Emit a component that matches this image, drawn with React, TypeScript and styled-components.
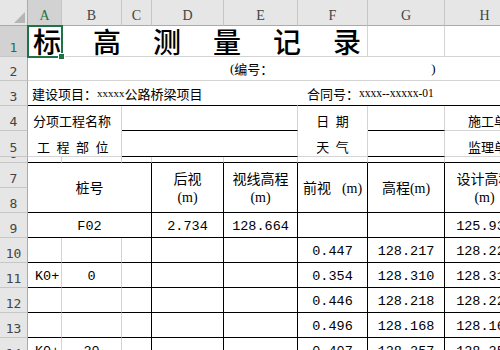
import React from "react";
import styled, { createGlobalStyle, css } from "styled-components";

const GlobalStyle = createGlobalStyle`
  html, body {
    margin: 0;
    padding: 0;
    background: #fff;
  }
  body {
    width: 500px;
    height: 350px;
    overflow: hidden;
  }
`;

const colWidths = [28, 34, 60, 30, 72, 74, 70, 77, 80];
const rowHeights = [26, 31, 24, 25, 25, 26, 6, 25, 25, 25, 25, 25, 25, 25, 25];
const letters = ["A", "B", "C", "D", "E", "F", "G", "H"];

type Line = "g" | "k" | undefined;
const lineColor = (l: Line) => (l === "k" ? "#000" : l === "g" ? "#d4d4d4" : "transparent");

const Sheet = styled.div`
  position: relative;
  display: grid;
  grid-template-columns: ${colWidths.map((w) => `${w}px`).join(" ")};
  grid-template-rows: ${rowHeights.map((h) => `${h}px`).join(" ")};
  width: 500px;
  height: 350px;
  overflow: hidden;
  font-family: "Noto Sans CJK SC", sans-serif;
  color: #000;
`;

const Corner = styled.div`
  grid-column: 1;
  grid-row: 1;
  background: #e6e6e6;
  border-right: 1px solid #ababab;
  border-bottom: 1px solid #ababab;
  box-sizing: border-box;
  position: relative;
  &::after {
    content: "";
    position: absolute;
    right: 2px;
    bottom: 2px;
    width: 0;
    height: 0;
    border-left: 11px solid transparent;
    border-bottom: 11px solid #b5b5b5;
  }
`;

const ColHead = styled.div<{ $col: number; $active?: boolean }>`
  grid-column: ${(p) => p.$col + 1};
  grid-row: 1;
  box-sizing: border-box;
  background: ${(p) => (p.$active ? "#d2d2d2" : "#e6e6e6")};
  border-right: 1px solid #c6c6c6;
  border-bottom: 1px solid #ababab;
  display: flex;
  align-items: flex-end;
  justify-content: center;
  padding-bottom: 1px;
  font-family: "Liberation Serif", serif;
  font-size: 14px;
  line-height: 16px;
  color: ${(p) => (p.$active ? "#217346" : "#444")};
`;

const RowHead = styled.div<{ $row: number; $active?: boolean }>`
  grid-column: 1;
  grid-row: ${(p) => p.$row + 1};
  box-sizing: border-box;
  background: ${(p) => (p.$active ? "#d2d2d2" : "#e6e6e6")};
  border-right: 1px solid #ababab;
  border-bottom: 1px solid #c6c6c6;
  display: flex;
  align-items: flex-end;
  justify-content: center;
  overflow: hidden;
  font-family: "DejaVu Sans Mono", monospace;
  font-size: 13px;
  line-height: 15px;
  padding-bottom: 1px;
  color: ${(p) => (p.$active ? "#217346" : "#444")};
`;

interface CellProps {
  $col: number;
  $row: number;
  $span?: number;
  $rspan?: number;
  $r?: Line;
  $b?: Line;
  $align?: "left" | "center";
  $v?: "center" | "end";
  $pl?: number;
  $mono?: boolean;
}

const Cell = styled.div<CellProps>`
  grid-column: ${(p) => p.$col + 1} / span ${(p) => p.$span || 1};
  grid-row: ${(p) => p.$row + 1} / span ${(p) => p.$rspan || 1};
  box-sizing: border-box;
  border-right: 1px solid ${(p) => lineColor(p.$r)};
  border-bottom: 1px solid ${(p) => lineColor(p.$b)};
  display: flex;
  align-items: ${(p) => (p.$v === "end" ? "flex-end" : "center")};
  justify-content: ${(p) => (p.$align === "left" ? "flex-start" : "center")};
  padding-left: ${(p) => p.$pl || 0}px;
  white-space: nowrap;
  overflow: visible;
  font-size: 13px;
  line-height: 17px;
  ${(p) =>
    p.$v === "end" &&
    css`
      padding-bottom: 1px;
    `}
  ${(p) =>
    p.$mono &&
    css`
      font-family: "Liberation Mono", monospace;
      font-size: 13.5px;
      padding-top: 2px;
    `}
`;

const Title = styled.div`
  display: flex;
  justify-content: space-between;
  width: 100%;
  box-sizing: border-box;
  padding: 0 6px 0 5px;
  font-size: 28px;
  font-weight: 500;
  line-height: 30px;
`;

const Latin = styled.span<{ $size?: number }>`
  font-family: "Liberation Serif", serif;
  font-size: ${(p) => p.$size || 13}px;
`;

const Gap = styled.span<{ $w: number }>`
  display: inline-block;
  width: ${(p) => p.$w}px;
`;

const Spaced = styled.span<{ $gap: number }>`
  letter-spacing: ${(p) => p.$gap}px;
  margin-right: -${(p) => p.$gap}px;
`;

const HeadText = styled.div`
  display: flex;
  flex-direction: column;
  align-items: center;
  font-size: 14px;
  line-height: 19px;
`;

const Selection = styled.div`
  position: absolute;
  left: 27px;
  top: 25px;
  width: 36px;
  height: 33px;
  box-sizing: border-box;
  border: 2px solid #217346;
  pointer-events: none;
  &::after {
    content: "";
    position: absolute;
    right: -4px;
    bottom: -4px;
    width: 5px;
    height: 5px;
    background: #217346;
    border: 1px solid #fff;
  }
`;

const unit = <Latin $size={14}>(m)</Latin>;

const titleChars = ["标", "高", "测", "量", "记", "录"];

const dataRows: { row: number; a?: string; b?: string; f: string; g: string; h: string }[] = [
  { row: 10, f: "0.447", g: "128.217", h: "128.220" },
  { row: 11, a: "K0+", b: "0", f: "0.354", g: "128.310", h: "128.310" },
  { row: 12, f: "0.446", g: "128.218", h: "128.220" },
  { row: 13, f: "0.496", g: "128.168", h: "128.160" },
  { row: 14, a: "K0+", b: "20", f: "0.407", g: "128.257", h: "128.250" },
];

export default function App() {
  return (
    <>
      <GlobalStyle />
      <Sheet>
        <Corner />
        {letters.map((l, i) => (
          <ColHead key={l} $col={i + 1} $active={i === 0}>
            {l}
          </ColHead>
        ))}
        {rowHeights.slice(1).map((_, i) => (
          <RowHead key={i} $row={i + 1} $active={i === 0}>
            {i + 1}
          </RowHead>
        ))}

        {/* row 1 */}
        <Cell $col={1} $row={1} $span={6} $r="g" $b="g">
          <Title>
            {titleChars.map((c) => (
              <span key={c}>{c}</span>
            ))}
          </Title>
        </Cell>
        <Cell $col={7} $row={1} $r="g" $b="g" />
        <Cell $col={8} $row={1} $b="g" />

        {/* row 2 */}
        <Cell $col={1} $row={2} $span={8} $b="g" $align="left" $pl={202}>
          <Latin>(</Latin>编号：<Gap $w={158} />
          <Latin>)</Latin>
        </Cell>

        {/* row 3 */}
        <Cell $col={1} $row={3} $span={5} $b="k" $align="left" $pl={4}>
          建设项目：<Latin $size={11}>xxxxx</Latin>公路桥梁项目
        </Cell>
        <Cell $col={6} $row={3} $span={3} $b="k" $align="left" $pl={9}>
          合同号：<Latin $size={11.5}>xxxx--xxxxx-01</Latin>
        </Cell>

        {/* row 4 */}
        <Cell $col={1} $row={4} $span={2} $r="g" $align="left" $pl={5} $v="end">
          分项工程名称
        </Cell>
        <Cell $col={3} $row={4} $span={3} $r="g" $b="k" />
        <Cell $col={6} $row={4} $r="g" $v="end">
          <Spaced $gap={6.5}>日期</Spaced>
        </Cell>
        <Cell $col={7} $row={4} $r="g" $b="k" />
        <Cell $col={8} $row={4} $b="g" $align="left" $pl={23} $v="end">
          施工单位
        </Cell>

        {/* row 5 */}
        <Cell $col={1} $row={5} $span={2} $r="g" $b="g" $align="left" $pl={9} $v="end">
          <Spaced $gap={6.5}>工程部位</Spaced>
        </Cell>
        <Cell $col={3} $row={5} $span={3} $r="g" $b="k" />
        <Cell $col={6} $row={5} $r="g" $b="g" $v="end">
          <Spaced $gap={6.5}>天气</Spaced>
        </Cell>
        <Cell $col={7} $row={5} $r="g" $b="k" />
        <Cell $col={8} $row={5} $b="g" $align="left" $pl={23} $v="end">
          监理单位
        </Cell>

        {/* row 6 */}
        {letters.map((l, i) => (
          <Cell key={l} $col={i + 1} $row={6} $r={i < 7 ? "g" : undefined} $b="k" />
        ))}

        {/* rows 7-8 header */}
        <Cell $col={1} $row={7} $span={3} $rspan={2} $r="k" $b="k">
          <HeadText>桩号</HeadText>
        </Cell>
        <Cell $col={4} $row={7} $rspan={2} $r="k" $b="k">
          <HeadText>
            <span>后视</span>
            {unit}
          </HeadText>
        </Cell>
        <Cell $col={5} $row={7} $rspan={2} $r="k" $b="k">
          <HeadText>
            <span>视线高程</span>
            {unit}
          </HeadText>
        </Cell>
        <Cell $col={6} $row={7} $rspan={2} $r="k" $b="k">
          <HeadText>
            <span>
              前视<Gap $w={11} />
              {unit}
            </span>
          </HeadText>
        </Cell>
        <Cell $col={7} $row={7} $rspan={2} $r="k" $b="k">
          <HeadText>
            <span>高程{unit}</span>
          </HeadText>
        </Cell>
        <Cell $col={8} $row={7} $rspan={2} $r="k" $b="k">
          <HeadText>
            <span>设计高程</span>
            {unit}
          </HeadText>
        </Cell>

        {/* row 9 */}
        <Cell $col={1} $row={9} $span={3} $r="k" $b="k" $mono>
          F02
        </Cell>
        <Cell $col={4} $row={9} $r="k" $b="k" $mono>
          2.734
        </Cell>
        <Cell $col={5} $row={9} $r="k" $b="k" $mono>
          128.664
        </Cell>
        <Cell $col={6} $row={9} $r="k" $b="k" />
        <Cell $col={7} $row={9} $r="k" $b="k" />
        <Cell $col={8} $row={9} $r="k" $b="k" $mono>
          125.930
        </Cell>

        {/* rows 10+ */}
        {dataRows.map((d) => (
          <React.Fragment key={d.row}>
            <Cell $col={1} $row={d.row} $r="g" $b="k" $align="left" $pl={7} $mono>
              {d.a}
            </Cell>
            <Cell $col={2} $row={d.row} $r="g" $b="k" $mono>
              {d.b}
            </Cell>
            <Cell $col={3} $row={d.row} $r="k" $b="k" />
            <Cell $col={4} $row={d.row} $r="k" $b="k" />
            <Cell $col={5} $row={d.row} $r="k" $b="k" />
            <Cell $col={6} $row={d.row} $r="k" $b="k" $mono>
              {d.f}
            </Cell>
            <Cell $col={7} $row={d.row} $r="k" $b="k" $mono>
              {d.g}
            </Cell>
            <Cell $col={8} $row={d.row} $r="k" $b="k" $mono>
              {d.h}
            </Cell>
          </React.Fragment>
        ))}

        <Selection />
      </Sheet>
    </>
  );
}
